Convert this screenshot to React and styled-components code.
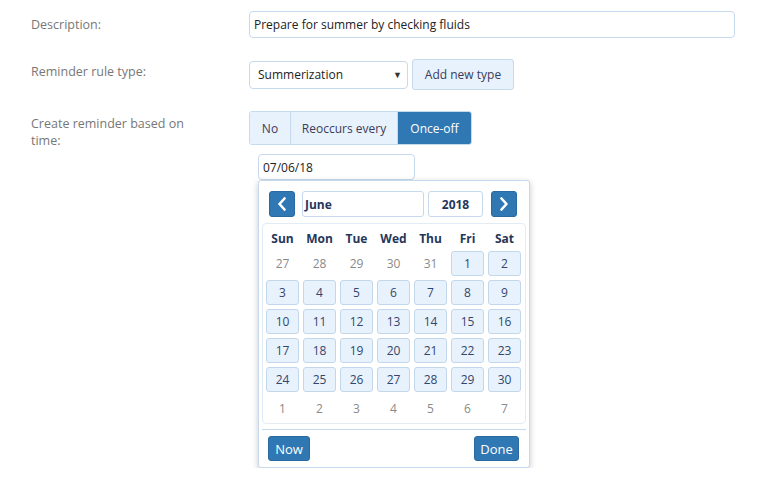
import styled, { createGlobalStyle } from 'styled-components';

const GlobalStyle = createGlobalStyle`
    html, body {
        margin: 0;
        background: #ffffff;
        font-family: "Open Sans", "Noto Sans", sans-serif;
        font-size: 12px;
    }
`;

const Form = styled.form`
    display: grid;
    grid-template-columns: 218px 486px;
    row-gap: 21px;
    padding: 11px 0 0 31px;
`;

const Label = styled.label`
    color: #777777;
    font-size: 12.5px;
    line-height: 17px;
    max-width: 160px;
    padding-top: ${props => props.top || 4}px;
`;

const Control = styled.div`
    display: flex;
    align-items: ${props => (props.column ? 'flex-start' : 'center')};
    flex-direction: ${props => (props.column ? 'column' : 'row')};
    gap: 4px;
`;

const TextInput = styled.input`
    box-sizing: border-box;
    width: ${props => props.width || '100%'};
    height: ${props => props.height || 27}px;
    padding: 0 4px;
    border: 1px solid #c7d9ec;
    border-radius: 4px;
    font: inherit;
    color: #222;
    background: #fff;
    outline: none;
`;

const FakeSelect = styled.div`
    box-sizing: border-box;
    width: 159px;
    height: 28px;
    padding: 0 5px 0 8px;
    display: flex;
    align-items: center;
    justify-content: space-between;
    border: 1px solid #c7d9ec;
    border-radius: 4px;
    color: #222;
    background: #fff;
`;

const Caret = styled.span`
    font-size: 9px;
    color: #333;
`;

const LightButton = styled.button`
    width: 102px;
    height: 31px;
    padding: 0;
    border: 1px solid #c7d9ec;
    border-radius: 3px;
    background: #e8f2fc;
    color: #3b3b5a;
    font: inherit;
`;

const Group = styled.div`
    display: flex;
    height: 32px;
    border: 1px solid #c7d9ec;
    border-radius: 3px;
    overflow: hidden;
`;

const Segment = styled.button`
    width: ${props => props.width}px;
    padding: 0;
    border: none;
    border-left: 1px solid #c7d9ec;
    background: ${props => (props.active ? '#2f78b4' : '#e8f2fc')};
    color: ${props => (props.active ? '#ffffff' : '#3b3b5a')};
    font: inherit;
    &:first-child {
        border-left: none;
    }
`;

const Picker = styled.div`
    margin: 5px 0 0 9px;
    display: flex;
    flex-direction: column;
`;

const Panel = styled.div`
    box-sizing: border-box;
    width: 272px;
    padding: 10px 3px 6px 3px;
    border: 1px solid #c7d9ec;
    border-radius: 3px;
    background: #fff;
    box-shadow: 0 2px 6px rgba(0, 0, 0, 0.22);
`;

const NavRow = styled.div`
    display: flex;
    align-items: center;
    padding: 0 9px 0 7px;
    height: 26px;
    margin-bottom: 6px;
`;

const NavButton = styled.button`
    width: 26px;
    height: 26px;
    padding: 0;
    display: flex;
    align-items: center;
    justify-content: center;
    border: 1px solid #2a6aa0;
    border-radius: 3px;
    background: #2f78b4;
    margin-left: ${props => props.ml || 0}px;
`;

const NavField = styled.div`
    box-sizing: border-box;
    height: 26px;
    width: ${props => props.width}px;
    margin-left: ${props => props.ml}px;
    padding: 0 2px;
    display: flex;
    align-items: center;
    justify-content: ${props => (props.center ? 'center' : 'flex-start')};
    border: 1px solid #c7d9ec;
    border-radius: 3px;
    font-weight: 700;
    color: #26365a;
`;

const Table = styled.div`
    border: 1px solid #e3ecf5;
    border-radius: 4px;
    padding: 6px 4px 2px 3px;
    display: grid;
    grid-template-columns: repeat(7, 33px);
    grid-template-rows: 17px repeat(6, 25px);
    column-gap: 4px;
    row-gap: 4px;
`;

const HeadCell = styled.div`
    display: flex;
    align-items: center;
    justify-content: center;
    font-weight: 700;
    color: #26365a;
`;

const Day = styled.div`
    box-sizing: border-box;
    display: flex;
    align-items: center;
    justify-content: center;
    border-radius: 3px;
    border: 1px solid ${props => (props.muted ? 'transparent' : '#c3d7eb')};
    background: ${props => (props.muted ? 'transparent' : '#e8f2fc')};
    color: ${props => (props.muted ? '#8a8a8a' : '#34466a')};
`;

const Footer = styled.div`
    display: flex;
    justify-content: space-between;
    margin-top: 5px;
    padding: 6px 7px 0 6px;
    border-top: 1px solid #c7d9ec;
`;

const PrimaryButton = styled.button`
    width: ${props => props.width}px;
    height: 25px;
    padding: 0;
    border: 1px solid #2a6aa0;
    border-radius: 3px;
    background: #2f78b4;
    color: #fff;
    font: inherit;
    font-size: 13px;
`;

const Chevron = ({ dir }) => (
    <svg width="10" height="14" viewBox="0 0 10 14">
        <path
            d={dir === 'left' ? 'M7.5 1.5 L2.5 7 L7.5 12.5' : 'M2.5 1.5 L7.5 7 L2.5 12.5'}
            fill="none"
            stroke="#fff"
            strokeWidth="2.6"
            strokeLinecap="round"
            strokeLinejoin="round"
        />
    </svg>
);

const DAYS = ['Sun', 'Mon', 'Tue', 'Wed', 'Thu', 'Fri', 'Sat'];

const buildCells = () => {
    const cells = [27, 28, 29, 30, 31].map(n => ({ n, muted: true }));
    for (let d = 1; d <= 30; d++) cells.push({ n: d });
    for (let d = 1; d <= 7; d++) cells.push({ n: d, muted: true });
    return cells;
};

const App = () => {
    const cells = buildCells();
    return (
        <>
            <GlobalStyle />
            <Form onSubmit={e => e.preventDefault()}>
                <Label top={5}>Description:</Label>
                <Control>
                    <TextInput defaultValue="Prepare for summer by checking fluids" />
                </Control>

                <Label top={4}>Reminder rule type:</Label>
                <Control>
                    <FakeSelect>
                        Summerization
                        <Caret>▼</Caret>
                    </FakeSelect>
                    <LightButton type="button">Add new type</LightButton>
                </Control>

                <Label top={4}>Create reminder based on time:</Label>
                <Control column>
                    <Group>
                        <Segment type="button" width={40}>No</Segment>
                        <Segment type="button" width={107}>Reoccurs every</Segment>
                        <Segment type="button" width={74} active>Once-off</Segment>
                    </Group>
                    <Picker>
                        <TextInput width="157px" height={26} defaultValue="07/06/18" />
                        <Panel>
                            <NavRow>
                                <NavButton type="button">
                                    <Chevron dir="left" />
                                </NavButton>
                                <NavField width={122} ml={7}>June</NavField>
                                <NavField width={55} ml={4} center>2018</NavField>
                                <NavButton type="button" ml={8}>
                                    <Chevron dir="right" />
                                </NavButton>
                            </NavRow>
                            <Table>
                                {DAYS.map(d => (
                                    <HeadCell key={d}>{d}</HeadCell>
                                ))}
                                {cells.map((c, i) => (
                                    <Day key={i} muted={c.muted}>
                                        {c.n}
                                    </Day>
                                ))}
                            </Table>
                            <Footer>
                                <PrimaryButton type="button" width={42}>Now</PrimaryButton>
                                <PrimaryButton type="button" width={45}>Done</PrimaryButton>
                            </Footer>
                        </Panel>
                    </Picker>
                </Control>
            </Form>
        </>
    );
};

export default App;
